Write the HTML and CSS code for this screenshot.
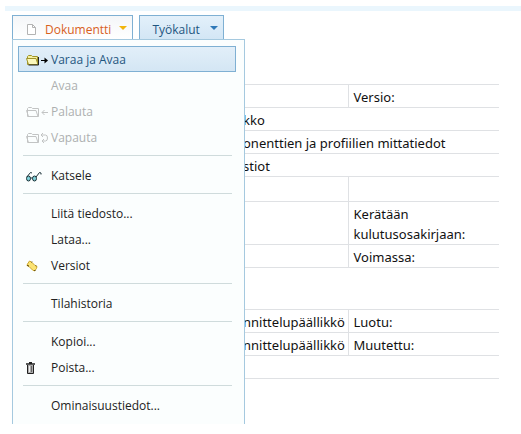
FILE: index.html
```html
<!DOCTYPE html>
<html lang="fi">
<head>
    <meta charset="UTF-8">
    <meta name="viewport" content="width=device-width, initial-scale=1.0">
    <title>Dokumentti</title>
    <link rel="stylesheet" href="styles.css">
</head>
<body>
    <header class="toolbar">
        <button type="button" class="tab active" aria-haspopup="true" aria-expanded="true">
            <svg class="page-icon" width="9" height="11" viewBox="0 0 9 11">
                <path d="M.5.5h5l3 3v7h-8z" fill="#fff" stroke="#b3b3b3"/>
                <path d="M5.5.5v3h3" fill="none" stroke="#b3b3b3"/>
            </svg>
            <span>Dokumentti</span>
            <svg class="caret" width="8" height="4" viewBox="0 0 8 4"><path d="M0 0h8L4 4z" fill="#f2b50c"/></svg>
        </button>
        <button type="button" class="tab" aria-haspopup="true">
            <span>Työkalut</span>
            <svg class="caret" width="8" height="4" viewBox="0 0 8 4"><path d="M0 0h8L4 4z" fill="#2f78b7"/></svg>
        </button>

        <div class="menu" role="menu">
            <div class="group">
                <button type="button" class="item selected" role="menuitem">
                    <svg width="23" height="12" viewBox="0 0 23 12">
                        <path d="M1.5 10.500V2.500l1-1h3l1 1h5v8z" fill="#f4efa0" stroke="#a09428"/>
                        <path d="M.5 4.500h9.500l2 6H2.500z" fill="#fbf8bc" stroke="#a09428"/>
                        <path d="M2.500 11h10V3" fill="none" stroke="#222"/>
                        <path d="M15 6.500h5" stroke="#000"/>
                        <path d="M18.500 3.500l3.500 3-3.500 3z" fill="#000"/>
                    </svg>
                    <span>Varaa ja Avaa</span>
                </button>
                <button type="button" class="item" role="menuitem" disabled>
                    <span>Avaa</span>
                </button>
                <button type="button" class="item" role="menuitem" disabled>
                    <svg width="23" height="12" viewBox="0 0 23 12" fill="none" stroke="#c2c4c4">
                        <path d="M1.500 10.500V2.500l1-1h3l1 1h6v8z"/>
                        <path d="M.5 4.500h9.500l2 6H2.500z"/>
                        <path d="M16 6.500h6M18.500 4L16 6.500 18.500 9"/>
                    </svg>
                    <span>Palauta</span>
                </button>
                <button type="button" class="item" role="menuitem" disabled>
                    <svg width="23" height="12" viewBox="0 0 23 12" fill="none" stroke="#c2c4c4">
                        <path d="M1.500 10.500V2.500l1-1h3l1 1h6v8z"/>
                        <path d="M.5 4.500h9.500l2 6H2.500z"/>
                        <path d="M17 1l-2 2 2 2M15 3h4.500q2 0 2 3t-2 3H16M18 7l-2 2 2 2"/>
                    </svg>
                    <span>Vapauta</span>
                </button>
            </div>
            <div class="group">
                <button type="button" class="item" role="menuitem">
                    <svg width="16" height="11" viewBox="0 0 16 11" fill="none" stroke="#1c3238">
                        <ellipse cx="2.500" cy="7.500" rx="2" ry="2.500" fill="#7fd0d8"/>
                        <ellipse cx="8.500" cy="7.500" rx="2" ry="2.500" fill="#7fd0d8"/>
                        <path d="M4.500 7h2M.8 6L4.500 1.500 6 2M10 6l3.500-4.500L15 2v1.500"/>
                    </svg>
                    <span>Katsele</span>
                </button>
            </div>
            <div class="group">
                <button type="button" class="item" role="menuitem">
                    <span>Liitä tiedosto...</span>
                </button>
                <button type="button" class="item" role="menuitem">
                    <span>Lataa...</span>
                </button>
                <button type="button" class="item" role="menuitem">
                    <svg width="12" height="12" viewBox="0 0 12 12">
                        <path d="M3.500 1l2 1L9 5.500l2 1-.5 2L8.500 11l-2-1L3 6.500l-2-1 .5-1.500z" fill="#fbe373" stroke="#cda72b"/>
                        <path d="M1 5.500h1.500v1M8 10.500h1.500M5.500 2.500l.5-1M9.500 5.500l1 .5" fill="none" stroke="#6d5716"/>
                    </svg>
                    <span>Versiot</span>
                </button>
            </div>
            <div class="group">
                <button type="button" class="item" role="menuitem">
                    <span>Tilahistoria</span>
                </button>
            </div>
            <div class="group">
                <button type="button" class="item" role="menuitem">
                    <span>Kopioi...</span>
                </button>
                <button type="button" class="item" role="menuitem">
                    <svg width="9" height="12" viewBox="0 0 9 12">
                        <path d="M1.500 3v8.500h6V3" fill="#aaa" stroke="#222"/>
                        <path d="M0 2h9M3 .5h3" stroke="#222" stroke-width="1.500"/>
                        <path d="M3.500 4v6" stroke="#eee"/>
                        <path d="M5.500 4v6" stroke="#666"/>
                    </svg>
                    <span>Poista...</span>
                </button>
            </div>
            <div class="group">
                <button type="button" class="item" role="menuitem">
                    <span>Ominaisuustiedot...</span>
                </button>
            </div>
        </div>
    </header>

    <main>
        <table class="details">
            <colgroup><col class="name"><col class="value"><col></colgroup>
            <tr><td></td><td></td><td class="split">Versio:</td></tr>
            <tr><td></td><td colspan="2">kko</td></tr>
            <tr><td></td><td colspan="2">onenttien ja profiilien mittatiedot</td></tr>
            <tr><td></td><td colspan="2">stiot</td></tr>
            <tr class="blank"><td></td><td></td><td class="split"></td></tr>
            <tr><td></td><td></td><td class="split">Kerätään kulutusosakirjaan:</td></tr>
            <tr><td></td><td></td><td class="split">Voimassa:</td></tr>
        </table>

        <table class="details">
            <colgroup><col class="name"><col class="value"><col></colgroup>
            <tr><td></td><td>nnittelupäällikkö</td><td class="split">Luotu:</td></tr>
            <tr><td></td><td>nnittelupäällikkö</td><td class="split">Muutettu:</td></tr>
            <tr><td></td><td></td><td></td></tr>
        </table>
    </main>
</body>
</html>
```
FILE: styles.css
```css
* {
    margin: 0;
    padding: 0;
    box-sizing: border-box;
}

body {
    font-family: "Noto Sans", "Open Sans", sans-serif;
    font-size: 13px;
    line-height: 20px;
    color: #111;
    background: #fff;
    min-height: 100vh;
    padding-top: 6px;
    padding-left: 5px;
}

button {
    font-family: "Open Sans", "Noto Sans", sans-serif;
    cursor: pointer;
}

.toolbar {
    position: relative;
    display: flex;
    gap: 6px;
    border-top: 5px solid #eaf6fd;
    padding: 4px 7px 0;
}

.tab {
    display: flex;
    align-items: center;
    height: 25px;
    padding: 4px 5px 0 12px;
    border: 1px solid #7fb0d3;
    background: linear-gradient(#e3f0fa, #d3e6f5);
    color: #1f5680;
    font-size: 12px;
    line-height: 20px;
}

.tab.active {
    padding-left: 14px;
    background: linear-gradient(#f4f6f8, #fff);
    border-bottom-color: #b4d3e6;
    color: #d8601c;
}

.page-icon {
    margin-right: 9px;
}

.caret {
    margin-left: 10px;
    margin-bottom: 4px;
}

.tab.active .caret {
    margin-left: 8px;
}

/* open drop-down, lies over the details */
.menu {
    position: absolute;
    top: 28px;
    left: 7px;
    width: 233px;
    padding: 6px 8px 6px 5px;
    border: 1px solid #a5c9df;
    border-bottom: none;
    background: #fbfefe;
}

.group + .group {
    margin-top: 5px;
    padding-top: 6px;
}

.group + .group::before {
    content: "";
    display: block;
    height: 1px;
    margin: -6px 4px 6px 5px;
    background: #cfdbdc;
}

.item {
    display: grid;
    grid-template-columns: 25px 1fr;
    align-items: center;
    width: 100%;
    height: 26px;
    padding: 2px 7px 0;
    border: 1px solid transparent;
    background: none;
    color: #222;
    font-size: 12px;
    line-height: 20px;
    text-align: left;
}

.item span {
    grid-column: 2;
}

.item:disabled {
    color: #adb0b0;
    cursor: default;
}

.item.selected {
    border-color: #7fb0d3;
    background: linear-gradient(#e2eff9, #d4e6f4);
    color: #1f5680;
}

main {
    padding: 44px 22px 0 8px;
}

.details {
    width: 100%;
    table-layout: fixed;
    border-collapse: collapse;
    margin-bottom: 41px;
}

.details .name {
    width: 225px;
}

.details .value {
    width: 110px;
}

.details td {
    height: 23px;
    padding: 2px 5px 0;
    border-top: 1px solid #dfe1e4;
    border-bottom: 1px solid #dfe1e4;
    vertical-align: top;
}

.details .split {
    border-left: 1px solid #dfe1e4;
}

.details .blank td {
    height: 25px;
}
```
